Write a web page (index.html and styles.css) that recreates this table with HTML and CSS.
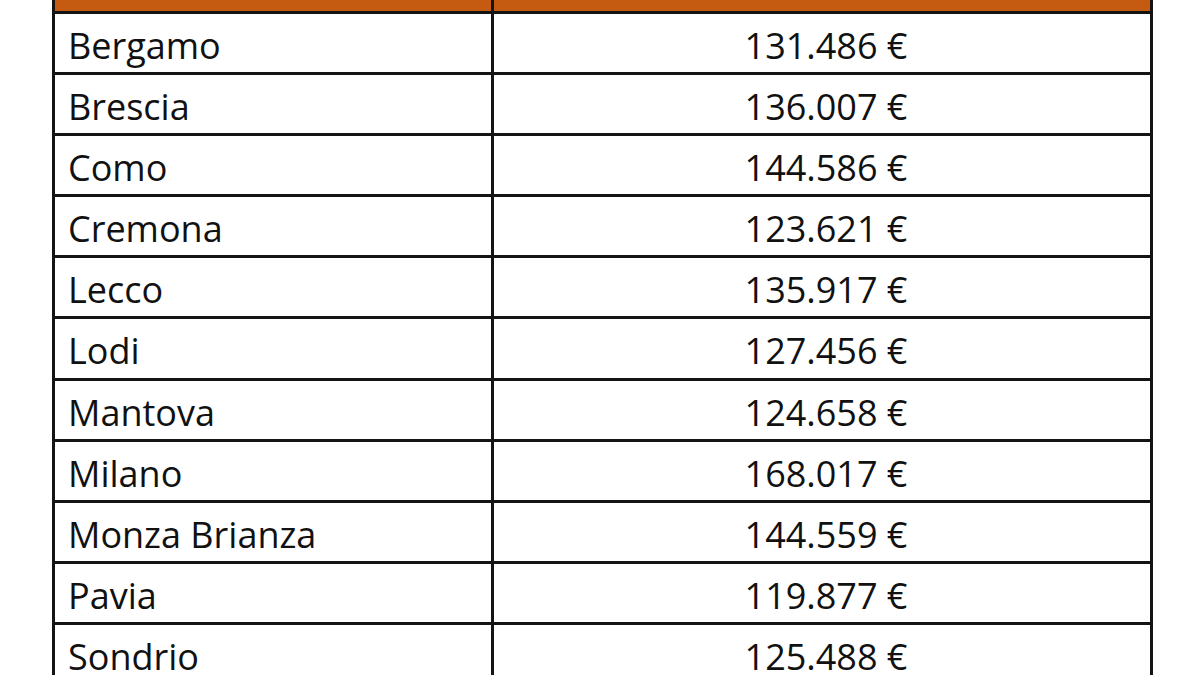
FILE: index.html
```html
<!DOCTYPE html>
<html lang="it">
<head>
<meta charset="utf-8">
<title>Province Lombardia</title>
<link rel="stylesheet" href="styles.css">
</head>
<body>
<div class="table">
  <div class="row head"><div class="name"></div><div class="value"></div></div>
  <div class="row"><div class="name">Bergamo</div><div class="value">131.486 €</div></div>
  <div class="row"><div class="name">Brescia</div><div class="value">136.007 €</div></div>
  <div class="row"><div class="name">Como</div><div class="value">144.586 €</div></div>
  <div class="row"><div class="name">Cremona</div><div class="value">123.621 €</div></div>
  <div class="row"><div class="name">Lecco</div><div class="value">135.917 €</div></div>
  <div class="row"><div class="name">Lodi</div><div class="value">127.456 €</div></div>
  <div class="row"><div class="name">Mantova</div><div class="value">124.658 €</div></div>
  <div class="row"><div class="name">Milano</div><div class="value">168.017 €</div></div>
  <div class="row"><div class="name">Monza Brianza</div><div class="value">144.559 €</div></div>
  <div class="row"><div class="name">Pavia</div><div class="value">119.877 €</div></div>
  <div class="row"><div class="name">Sondrio</div><div class="value">125.488 €</div></div>
</div>
</body>
</html>
```
FILE: styles.css
```css
html, body {
  margin: 0;
  padding: 0;
  background: #ffffff;
  overflow: hidden;
  height: 675px;
}
.table {
  margin-left: 52px;
  width: 1095px;
  border-left: 3px solid #141414;
  border-right: 3px solid #141414;
  font-family: "Open Sans", "Liberation Sans", sans-serif;
  font-size: 36px;
  color: #111111;
}
.row {
  display: flex;
  height: 58.1px;
  border-bottom: 3px solid #141414;
}
.row.head {
  height: 11px;
  background: #c55a11;
}
.name {
  width: 439px;
  flex: none;
  border-right: 3px solid #141414;
  padding: 14px 0 0 13px;
  box-sizing: border-box;
  line-height: 36px;
}
.value {
  flex: 1;
  text-align: center;
  padding-top: 14px;
  line-height: 36px;
  padding-left: 8px;
}
.head .name, .head .value {
  padding: 0;
}
```
